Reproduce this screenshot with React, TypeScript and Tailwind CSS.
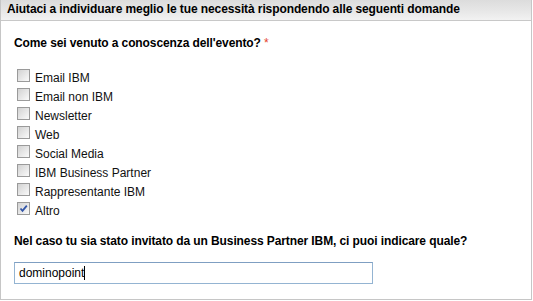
import React from 'react';

const options = [
  { label: 'Email IBM', checked: false },
  { label: 'Email non IBM', checked: false },
  { label: 'Newsletter', checked: false },
  { label: 'Web', checked: false },
  { label: 'Social Media', checked: false },
  { label: 'IBM Business Partner', checked: false },
  { label: 'Rappresentante IBM', checked: false },
  { label: 'Altro', checked: true },
];

function Checkbox({ checked }: { checked: boolean }) {
  return (
    <span className="w-[13px] h-[13px] shrink-0 border border-[#9a9a9a] bg-gradient-to-br from-[#d2d2d2] to-[#fafafa] flex items-center justify-center">
      {checked && (
        <svg width="11" height="11" viewBox="0 0 11 11">
          <path d="M2.5 5.5 L4.5 7.8 L8.8 2.6" fill="none" stroke="#3356a8" strokeWidth="1.8" />
        </svg>
      )}
    </span>
  );
}

export default function App() {
  return (
    <div className="w-[532px] h-[300px] bg-white border-x border-b border-[#c6c6c6] text-[12px] text-[#111] font-['Liberation_Sans',Arial,sans-serif]">
      {/* Header */}
      <div className="h-[21px] border-b border-[#c8c8c8] bg-gradient-to-b from-[#dcdcdc] via-[#e6e6e6] to-[#f2f2f2] pl-[6px] leading-[18px] font-bold tracking-[-0.1px] text-black">
        Aiutaci a individuare meglio le tue necessità rispondendo alle seguenti domande
      </div>

      <div className="pl-[13px]">
        <p className="mt-[15px] leading-[14px] font-bold tracking-[-0.1px] text-black">
          Come sei venuto a conoscenza dell'evento? <span className="text-[#e4432d] font-normal">*</span>
        </p>

        <div className="mt-[19px] flex flex-col">
          {options.map((o) => (
            <label key={o.label} className="h-[19px] flex items-start gap-[5px] pl-[3px]">
              <Checkbox checked={o.checked} />
              <span className="leading-[19px]">{o.label}</span>
            </label>
          ))}
        </div>

        <p className="mt-[13px] leading-[14px] font-bold tracking-[-0.1px] text-black">
          Nel caso tu sia stato invitato da un Business Partner IBM, ci puoi indicare quale?
        </p>

        <div className="mt-[14px] w-[359px] h-[22px] border border-[#94b4d2] border-t-[#7f9fc2] flex items-center pl-[4px] text-black">
          <span>dominopoint</span>
          <span className="w-px h-[14px] bg-black" />
        </div>
      </div>
    </div>
  );
}
